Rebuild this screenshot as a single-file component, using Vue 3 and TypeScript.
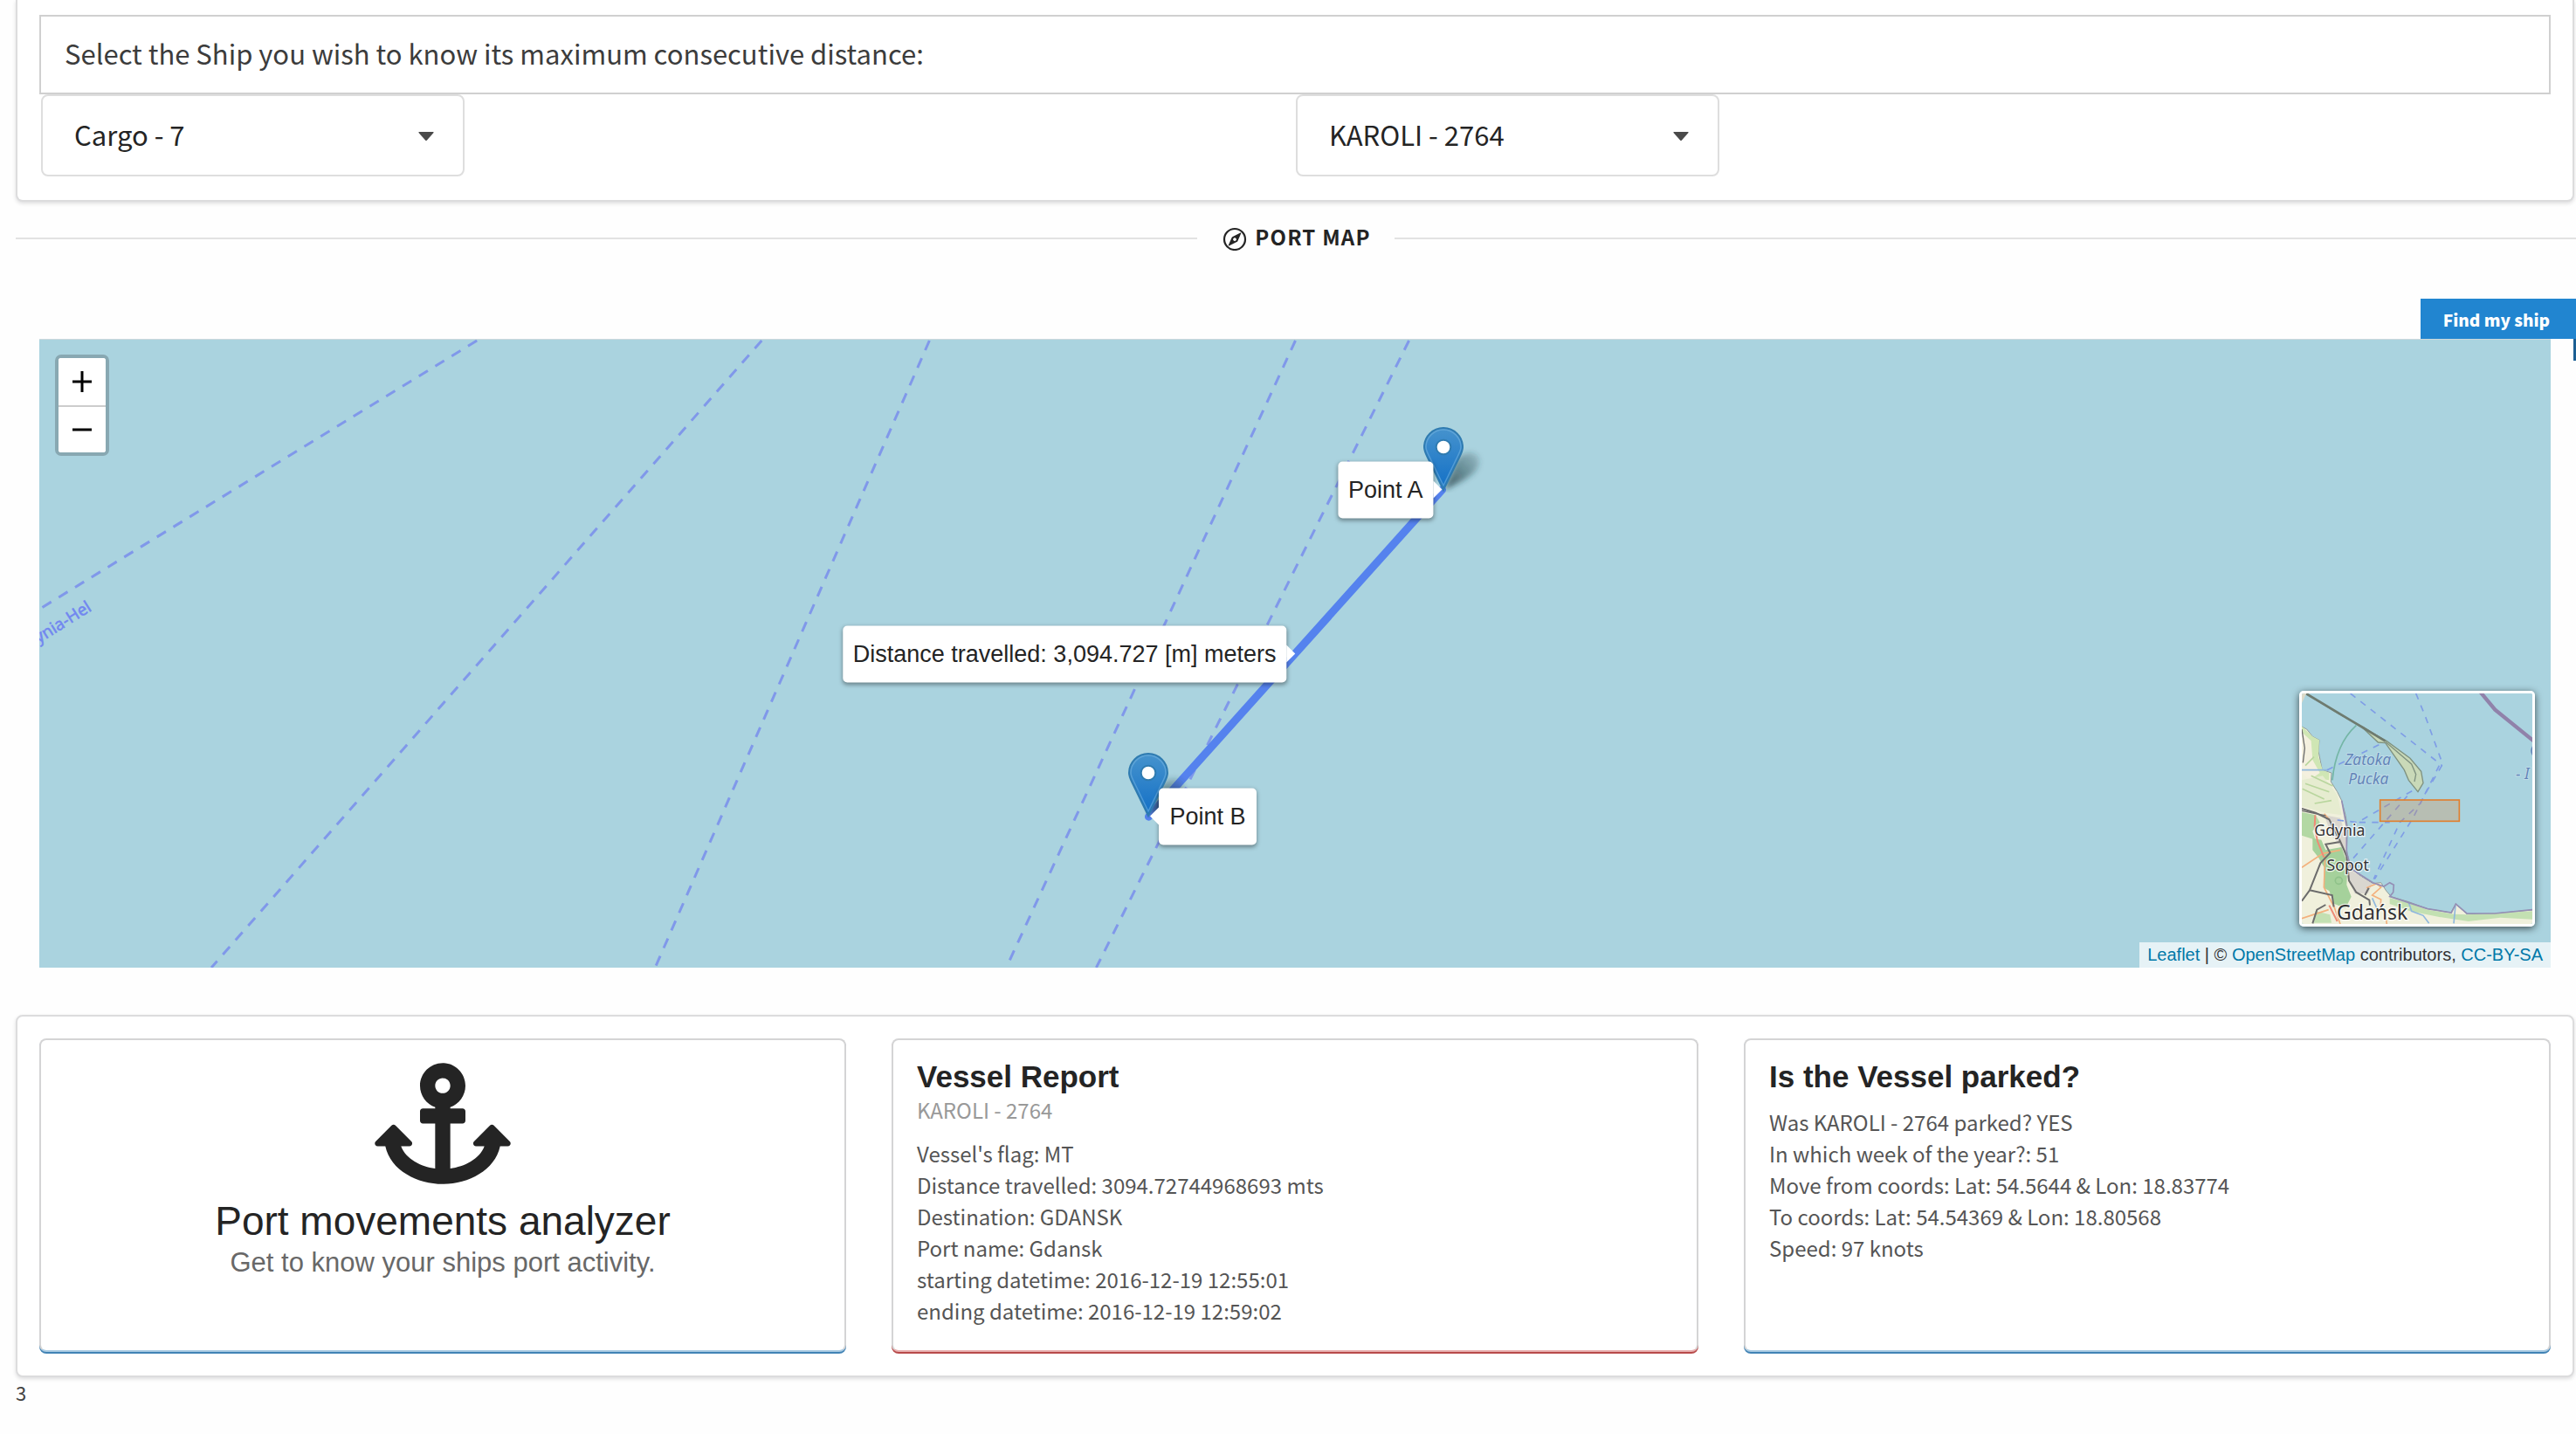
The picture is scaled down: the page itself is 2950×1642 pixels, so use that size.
<script setup lang="ts">
import { ref } from 'vue'

interface Anchor { x: number; y: number }
interface Tip extends Anchor { text: string; side: 'left' | 'right' }

const MAP_W = 2875
const MAP_H = 720

const shipType = ref('Cargo - 7')
const ship = ref('KAROLI - 2764')

const pins: Anchor[] = [
  { x: 1607, y: 172 },
  { x: 1270, y: 546 },
]
const tips: Tip[] = [
  { x: 1606, y: 172, text: 'Point A', side: 'left' },
  { x: 1438, y: 360, text: 'Distance travelled: 3,094.727 [m] meters', side: 'left' },
  { x: 1272, y: 547, text: 'Point B', side: 'right' },
]
const ferries: number[][] = [
  [501, 1, 0, 309],
  [827, 1, 197, 720],
  [1019, 1, 705, 720],
  [1438, 1, 1107, 720],
  [1568, 1, 1210, 720],
]
const report: string[] = [
  "Vessel's flag: MT",
  'Distance travelled: 3094.72744968693 mts',
  'Destination: GDANSK',
  'Port name: Gdansk',
  'starting datetime: 2016-12-19 12:55:01',
  'ending datetime: 2016-12-19 12:59:02',
]
const parked: string[] = [
  'Was KAROLI - 2764 parked? YES',
  'In which week of the year?: 51',
  'Move from coords: Lat: 54.5644 & Lon: 18.83774',
  'To coords: Lat: 54.54369 & Lon: 18.80568',
  'Speed: 97 knots',
]
const place = (p: Anchor) => ({
  left: `${(p.x / MAP_W) * 100}%`,
  top: `${(p.y / MAP_H) * 100}%`,
})
</script>

<template>
  <main class="page">
    <section class="panel picker">
      <p class="message">Select the Ship you wish to know its maximum consecutive distance:</p>
      <div class="fields">
        <div class="field">
          <select v-model="shipType" aria-label="Ship type"><option>Cargo - 7</option></select>
          <svg class="caret" viewBox="0 0 18 10" aria-hidden="true"><path d="M1 0h16q1 0 .5 1L10 9.500q-1 1-2 0L.5 1Q0 0 1 0z" /></svg>
        </div>
        <div class="field">
          <select v-model="ship" aria-label="Ship name"><option>KAROLI - 2764</option></select>
          <svg class="caret" viewBox="0 0 18 10" aria-hidden="true"><path d="M1 0h16q1 0 .5 1L10 9.500q-1 1-2 0L.5 1Q0 0 1 0z" /></svg>
        </div>
      </div>
    </section>

    <h2 class="divider">
      <svg class="compass" viewBox="0 0 28 28" aria-hidden="true">
        <circle cx="14" cy="15" r="12" fill="none" stroke="currentColor" stroke-width="2.200" />
        <path fill="currentColor" fill-rule="evenodd" d="M20.600 7.600q1-.4.6.7l-3.800 8.600q-.3.800-1.100 1.200l-8.900 4.300q-1 .4-.6-.7l3.800-8.600q.3-.8 1.100-1.200zM14 13.200a1.900 1.900 0 1 0 .01 0z" />
      </svg>
      <span>Port map</span>
    </h2>

    <div class="ribbon-row"><button type="button" class="ribbon">Find my ship</button></div>

    <section class="map" aria-label="Port map">
      <svg class="sea" :viewBox="`0 0 ${MAP_W} ${MAP_H}`" preserveAspectRatio="none" aria-hidden="true">
        <line v-for="(f, i) in ferries" :key="i" class="ferry" :x1="f[0]" :y1="f[1]" :x2="f[2]" :y2="f[3]" />
        <text class="route-name" text-anchor="end" transform="translate(61 310) rotate(-32)">ynia-Hel</text>
        <line class="track" x1="1606" y1="172" x2="1270" y2="547" />
      </svg>

      <svg v-for="(p, i) in pins" :key="i" class="pin" :style="place(p)" viewBox="0 0 75 75" role="img" :aria-label="tips[i * 2].text">
        <defs>
          <linearGradient :id="`fill${i}`" x1="0" y1="0" x2="0" y2="1">
            <stop offset="0" stop-color="#4693cd" />
            <stop offset="1" stop-color="#126fc6" />
          </linearGradient>
          <linearGradient :id="`dusk${i}`" x1="0" y1="1" x2="1" y2="0">
            <stop offset="0" stop-color="#1c3a40" stop-opacity=".8" />
            <stop offset="1" stop-color="#1c3a40" stop-opacity=".15" />
          </linearGradient>
          <filter :id="`soft${i}`" x="-30%" y="-30%" width="160%" height="160%"><feGaussianBlur stdDeviation="3" /></filter>
        </defs>
        <path :fill="`url(#dusk${i})`" :filter="`url(#soft${i})`" d="M24 72L38 38C46 26 64 26 64 40C63 54 44 62 24 72z" />
        <path :fill="`url(#fill${i})`" stroke="#2f7bb0" stroke-width="2" d="M23 72L4.500 34C1 27 1 23 1 23A22 22 0 0 1 45 23C45 23 45 27 41.500 34z" />
        <path fill="none" stroke="#6fb0de" stroke-opacity=".6" stroke-width="1.500" d="M23 67L6.500 33C3.500 27 3 24 3 23A20 20 0 0 1 43 23C43 24 42.500 27 39.500 33z" />
        <circle cx="23" cy="23" r="8.300" fill="#fff" stroke="#2f7bb0" stroke-width="2" />
      </svg>

      <div v-for="t in tips" :key="t.text" class="tip" :class="t.side" :style="place(t)">{{ t.text }}</div>

      <div class="zoom">
        <button type="button" aria-label="Zoom in"><svg viewBox="0 0 22 22"><path d="M11 -1v24M0 11h22" /></svg></button>
        <button type="button" aria-label="Zoom out"><svg viewBox="0 0 22 22"><path d="M0 11h22" /></svg></button>
      </div>

      <svg class="minimap" viewBox="168 102 792 792" role="img" aria-label="Overview map">
        <rect x="168" y="102" width="792" height="792" fill="#aad3df" />
        <path fill="#f0f0dc" stroke="#8f9c9a" stroke-width="3" d="M160 212L185 225 205 250 228 262 225 300 238 365 270 375 268 405 290 440 305 470 318 520 325 560 322 640 335 700 370 730 412 755 440 752 458 780 475 800 535 818 600 842 680 855 697 825 735 860 830 858 970 845V900H160z" />
        <path fill="#cfe6b4" d="M168 215L205 250 228 262 225 320 240 365 262 375 262 400 230 395 200 385 168 345z" />
        <path fill="#f4f0df" d="M168 235L200 265 205 330 230 375 195 400 168 375z" />
        <path fill="#e6ecd0" d="M168 400L240 385 290 450 305 520 250 512 168 490z" />
        <path fill="none" stroke="#b9d69e" stroke-width="5" d="M170 430L245 465M180 412L262 440M200 385L275 420M212 480L270 470M180 350L210 320" />
        <path fill="#b3d8a3" d="M168 510L215 520 230 545 205 575 215 605 168 590z" />
        <path fill="#d9d6cf" d="M245 520L300 530 322 600 322 650 345 715 410 755 395 790 350 790 325 735 312 640 270 590z" />
        <path fill="#a5d19b" d="M205 600L235 605 250 640 305 630 325 690 322 760 338 800 318 840 280 825 262 780 244 770 245 700 225 665 205 640z" />
        <path fill="#c3e0b2" d="M470 805L535 822 600 845 690 860 740 862 960 850V878L850 872 740 885 640 870 540 850 470 825zM215 850L265 862 270 890 210 890z" />
        <circle cx="295" cy="745" r="12" fill="none" stroke="#8fc28a" stroke-width="5" />
        <g fill="none" stroke="#f3b07c" stroke-width="5">
          <path d="M168 700L240 652 300 640M248 660L244 768 280 838 300 894M168 875L260 845M390 770L425 755 440 768 410 795 440 810 438 835M455 860L460 894M245 515L262 535" />
        </g>
        <path fill="none" stroke="#ef8b76" stroke-width="6" d="M214 520L212 560 222 610 244 665M262 830L290 885" />
        <g fill="none" stroke="#6c6c6c" stroke-width="6">
          <path d="M168 498L215 512 262 535 300 610 322 660 330 745 355 785 400 812 402 830M300 612L250 620 265 650 232 685 195 778 272 795 278 835M195 778L168 815M205 892L220 845 250 828M385 795L398 770" />
          <path stroke-width="4" d="M168 225L178 290 172 340M168 505L250 522" />
        </g>
        <path fill="none" stroke="#8fb8dd" stroke-width="5" d="M410 805L430 850M535 820L545 850 585 865 605 892M696 830L690 892M168 365L260 365" />
        <path fill="none" stroke="#948fb5" stroke-width="5" d="M305 470L322 560 322 650 338 705 412 752 450 765 470 752 484 760 482 785 470 800 600 842 682 855 697 825 735 858 830 858 960 845" />
        <path fill="none" stroke="#74b6a6" stroke-width="5" d="M355 212Q285 275 273 400" />
        <path fill="none" stroke="#7f9280" stroke-width="4" d="M180 102L300 175 380 218 455 265" />
        <path fill="#c9d9b8" stroke="#7f9280" stroke-width="4" d="M375 218L460 266 540 325 578 370 585 410 567 440 535 400 520 365 455 272 430 270z" />
        <path fill="none" stroke="#6e7b70" stroke-width="8" d="M182 102L375 218 455 266" />
        <path fill="none" stroke="#7f9280" stroke-width="4" d="M455 268L545 345 560 380 555 405" />
        <path fill="#dcd9c8" d="M168 102H184L168 135z" />
        <g class="mini-ferry">
          <path d="M335 102L625 330 650 350" />
          <path d="M560 102L592 180 652 345 590 450 550 530 418 740" />
          <path d="M640 350L575 480 505 545 415 740" />
          <path d="M255 365L440 275" />
          <path d="M290 537L360 545 550 435" />
          <path d="M345 668L530 455 M365 545H470" />
        </g>
        <path fill="none" stroke="#9082aa" stroke-width="13" d="M782 98L832 158 965 266" />
        <path fill="none" stroke="#6285b8" stroke-width="5" d="M962 284Q952 300 962 314" />
        <g class="sea-name">
          <text x="395" y="349">Zatoka</text>
          <text x="397" y="415">Pucka</text>
          <text x="903" y="396" text-anchor="start">- I</text>
        </g>
        <g class="town">
          <text x="298" y="590">Gdynia</text>
          <text x="326" y="711">Sopot</text>
          <text x="410" y="880" class="city">Gdańsk</text>
        </g>
        <rect x="437" y="468" width="272" height="73" fill="#e08030" fill-opacity=".25" stroke="#e08030" stroke-width="5" />
      </svg>

      <div class="credits">
        <a href="#leaflet">Leaflet</a> | © <a href="#osm">OpenStreetMap</a> contributors, <a href="#license">CC-BY-SA</a>
      </div>
    </section>

    <section class="panel cards">
      <article class="card intro">
        <svg class="anchor" viewBox="0 0 576 512" aria-hidden="true"><path fill="currentColor" d="M12.971 352h32.394C67.172 454.735 181.944 512 288 512c106.229 0 220.853-57.380 242.635-160h32.394c10.691 0 16.045-12.926 8.485-20.485l-67.029-67.029c-4.686-4.686-12.284-4.686-16.971 0l-67.029 67.029c-7.560 7.560-2.206 20.485 8.485 20.485h35.146c-20.290 54.317-84.963 86.588-144.117 94.015V256h52c6.627 0 12-5.373 12-12v-40c0-6.627-5.373-12-12-12h-52v-5.470c37.281-13.226 63.999-48.827 63.995-90.634C383.985 43.121 341.150.130 288.600 0 235.500-.3 192 42.800 192 96c0 41.797 26.746 77.357 64 90.530V192h-52c-6.627 0-12 5.373-12 12v40c0 6.627 5.373 12 12 12h52v190.015c-58.936-7.399-123.820-39.679-144.117-94.015h35.146c10.691 0 16.045-12.926 8.485-20.485l-67.029-67.029c-4.686-4.686-12.284-4.686-16.971 0L4.485 331.515C-3.074 339.074 2.280 352 12.971 352zM288 64c17.645 0 32 14.355 32 32s-14.355 32-32 32-32-14.355-32-32 14.355-32 32-32z" /></svg>
        <h1>Port movements analyzer</h1>
        <p class="lead">Get to know your ships port activity.</p>
      </article>
      <article class="card red">
        <h3>Vessel Report</h3>
        <p class="meta">KAROLI - 2764</p>
        <p v-for="line in report" :key="line" class="line">{{ line }}</p>
      </article>
      <article class="card">
        <h3>Is the Vessel parked?</h3>
        <p v-for="line in parked" :key="line" class="line">{{ line }}</p>
      </article>
    </section>
    <p class="count">3</p>
  </main>
</template>

<style>
body {
  background: #fefefe;
  overflow-x: hidden;
}
</style>

<style scoped>
.page {
  font-family: "Noto Sans CJK SC", "Open Sans", sans-serif;
  color: #242424;
  padding-left: 18px;
}
.page *, .page *::before, .page *::after {
  box-sizing: border-box;
}
p, h1, h2, h3 {
  margin: 0;
}
.panel {
  margin-right: 2px;
  border: 2px solid #dcdcdd;
  border-radius: 8px;
  box-shadow: 0 2px 4px rgba(34, 36, 38, .15);
  background: #fff;
}
.picker {
  border-top: 0;
  border-radius: 0 0 8px 8px;
  padding: 17px 25px 27px;
}
.message {
  border: 2px solid #d0d0d0;
  padding: 0 27px 4px;
  font-size: 31px;
  line-height: 83px;
  color: #3c3c3c;
}
.fields {
  display: grid;
  grid-template-columns: 1fr 1fr;
  padding-left: 2px;
}
.field {
  position: relative;
  width: 485px;
}
.field select {
  appearance: none;
  display: block;
  width: 100%;
  height: 94px;
  padding: 0 36px 4px;
  border: 2px solid #dedede;
  border-radius: 8px;
  background: #fff;
  color: #242424;
  font: inherit;
  font-size: 31px;
}
.caret {
  position: absolute;
  right: 35px;
  top: 43px;
  width: 18px;
  height: 10px;
  fill: #4a4a4a;
  pointer-events: none;
}
.divider {
  display: flex;
  align-items: center;
  gap: 9px;
  margin-top: 24px;
  padding-right: 2px;
  font-size: 24px;
  line-height: 36px;
  font-weight: 700;
  letter-spacing: .05em;
  text-transform: uppercase;
}
.divider::before, .divider::after {
  content: "";
  flex: 1;
  height: 2px;
  background: #e2e2e2;
}
.divider::before {
  margin-right: 20px;
}
.divider::after {
  margin-left: 18px;
  margin-right: -2px;
}
.divider span {
  line-height: 32px;
  padding-bottom: 4px;
}
.compass {
  width: 28px;
  height: 28px;
}
.ribbon-row {
  display: flex;
  justify-content: flex-end;
  margin-top: 51px;
}
.ribbon {
  position: relative;
  height: 46px;
  padding: 0 30px 0 26px;
  border: 0;
  background: #2185d0;
  color: #fff;
  font: inherit;
  font-size: 19px;
  font-weight: 900;
}
.ribbon::after {
  content: "";
  position: absolute;
  right: 0;
  top: 100%;
  width: 3px;
  height: 25px;
  background: #1b5f93;
}
.map {
  position: relative;
  overflow: hidden;
  height: 720px;
  margin: 0 29px 0 27px;
  border-top: 1px solid #ccd8dc;
  background: #aad3df;
  font-family: "Liberation Sans", Arial, sans-serif;
}
.sea {
  position: absolute;
  inset: 0;
  width: 100%;
  height: 100%;
}
.ferry {
  stroke: #8098ea;
  stroke-width: 3;
  stroke-dasharray: 12 10;
}
.route-name {
  font-family: "Noto Sans", sans-serif;
  font-size: 19px;
  fill: #7287f0;
  stroke: #7287f0;
  stroke-width: .5px;
}
.track {
  stroke: #5582ee;
  stroke-width: 9;
  stroke-linecap: round;
}
.pin {
  position: absolute;
  width: 75px;
  height: 75px;
  margin: -72px 0 0 -23px;
}
.tip {
  position: absolute;
  padding: 0 12px;
  border-radius: 5px;
  background: #fff;
  box-shadow: 0 2px 5px rgba(0, 0, 0, .4);
  font-size: 27px;
  line-height: 65px;
  white-space: nowrap;
}
.tip.left {
  transform: translate(calc(-100% - 10px), -50%);
}
.tip.right {
  transform: translate(10px, -50%);
}
.tip::after {
  content: "";
  position: absolute;
  top: 22px;
  border: 10px solid transparent;
}
.tip.left::after {
  left: 100%;
  border-left-color: #fff;
  border-right-width: 0;
}
.tip.right::after {
  right: 100%;
  border-right-color: #fff;
  border-left-width: 0;
}
.zoom {
  position: absolute;
  left: 18px;
  top: 17px;
  border: 4px solid #88a8b2;
  border-radius: 7px;
  background: #fff;
}
.zoom button {
  display: flex;
  align-items: center;
  justify-content: center;
  width: 54px;
  height: 54px;
  padding: 0;
  border: 0;
  border-radius: 3px;
  background: #fff;
}
.zoom button + button {
  border-top: 2px solid #ccc;
  border-radius: 0 0 3px 3px;
}
.zoom svg {
  width: 22px;
  height: 22px;
  overflow: visible;
  stroke: #000;
  stroke-width: 3;
}
.minimap {
  position: absolute;
  right: 18px;
  bottom: 47px;
  width: 270px;
  height: 270px;
  border: 3px solid #fff;
  border-radius: 5px;
  box-shadow: 0 2px 8px rgba(0, 0, 0, .65);
}
.mini-ferry {
  fill: none;
  stroke: #7f9de6;
  stroke-width: 5;
  stroke-dasharray: 22 22;
}
.sea-name {
  font-family: "Noto Sans", sans-serif;
  font-size: 52px;
  font-style: italic;
  fill: #6285b8;
  stroke: #c4dfea;
  stroke-width: 5;
  paint-order: stroke;
  text-anchor: middle;
}
.town {
  font-family: "Noto Sans", sans-serif;
  font-size: 53px;
  fill: #333;
  stroke: #fff;
  stroke-width: 8;
  stroke-opacity: .75;
  paint-order: stroke;
  text-anchor: middle;
}
.city {
  font-size: 69px;
}
.credits {
  position: absolute;
  right: 0;
  bottom: 0;
  padding: 0 9px;
  background: rgba(255, 255, 255, .7);
  color: #333;
  font-size: 20px;
  line-height: 29px;
}
.credits a {
  color: #0078a8;
  text-decoration: none;
}
.cards {
  display: grid;
  grid-template-columns: 1fr 1fr 1fr;
  gap: 52px;
  margin-top: 54px;
  padding: 25px 25px 27px;
}
.card {
  min-height: 359px;
  padding: 24px 27px;
  border: 2px solid #d4d4d5;
  border-bottom-color: #a9cbe3;
  border-radius: 8px;
  box-shadow: 0 2px 0 #4183b5;
  background: #fff;
}
.card.red {
  border-bottom-color: #e8b0b0;
  box-shadow: 0 2px 0 #b84a4a;
}
.intro {
  display: flex;
  flex-direction: column;
  align-items: center;
  padding-top: 26px;
  font-family: "Liberation Sans", Arial, sans-serif;
}
.anchor {
  width: 156px;
  height: 139px;
}
h1 {
  margin-top: 15px;
  font-size: 46px;
  line-height: 54px;
  font-weight: 400;
}
.lead {
  font-size: 31px;
  line-height: 42px;
  color: #686868;
}
h3 {
  font-family: "Liberation Sans", Arial, sans-serif;
  font-size: 35px;
  line-height: 36px;
}
.meta {
  margin-top: 2px;
  font-size: 24px;
  line-height: 36px;
  color: #999;
}
.line {
  font-size: 24px;
  line-height: 36px;
  color: #555;
}
.meta + .line {
  margin-top: 14px;
}
h3 + .line {
  margin-top: 16px;
}
.count {
  font-size: 22px;
  line-height: 34px;
  color: #444;
}
</style>
